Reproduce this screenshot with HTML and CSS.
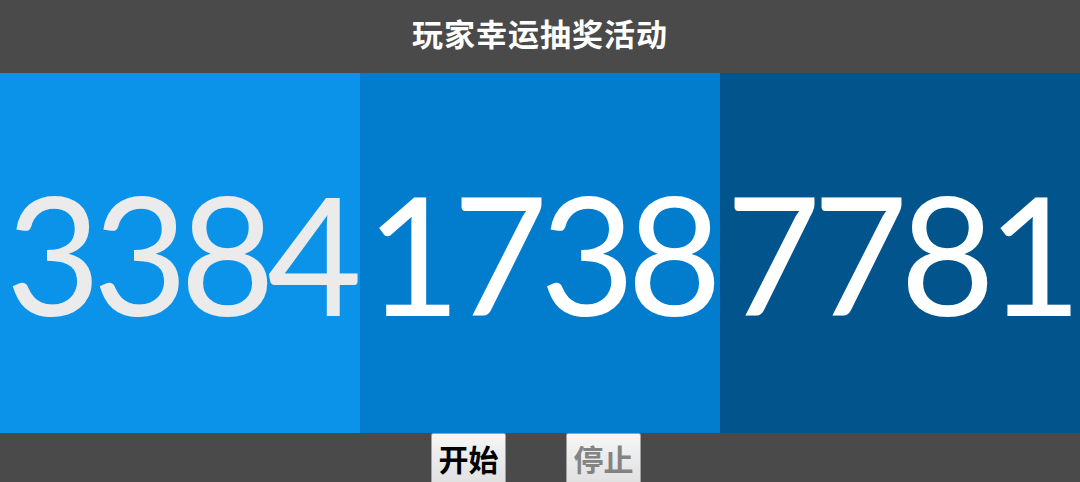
FILE: index.html
```html
<!DOCTYPE html>
<html lang="zh-CN">
<head>
<meta charset="utf-8">
<title>玩家幸运抽奖活动</title>
<link rel="stylesheet" href="styles.css">
</head>
<body>
<header class="top">
  <h1 class="title">玩家幸运抽奖活动</h1>
</header>
<main class="panels">
  <div class="panel p1">3384</div>
  <div class="panel p2">1738</div>
  <div class="panel p3">7781</div>
</main>
<footer class="bar">
  <button class="btn" type="button">开始</button>
  <button class="btn off" type="button" disabled>停止</button>
</footer>
</body>
</html>
```
FILE: styles.css
```css
html, body {
  margin: 0;
  padding: 0;
  background: #4a4a4a;
  overflow: hidden;
}
body {
  width: 1080px;
  height: 482px;
  font-family: "Noto Sans CJK SC", "Noto Sans", sans-serif;
}
.top {
  height: 73px;
  background: #4a4a4a;
  display: flex;
  align-items: center;
  justify-content: center;
}
.title {
  margin: 0;
  color: #ffffff;
  font-size: 31px;
  font-weight: 700;
  letter-spacing: 1px;
  line-height: 1;
  padding-bottom: 8px;
}
.panels {
  display: flex;
  height: 360px;
}
.panel {
  width: 360px;
  height: 360px;
  font-family: "Lato", "Open Sans", sans-serif;
  font-size: 164px;
  letter-spacing: -8px;
  line-height: 360px;
  text-align: center;
  color: #ffffff;
  overflow: hidden;
  white-space: nowrap;
}
.p1 { background: #0b93e9; color: #ebebeb; }
.p2 { background: #027dcd; }
.p3 { background: #01548c; }
.bar {
  height: 49px;
  background: #4a4a4a;
  display: flex;
  justify-content: center;
  align-items: flex-start;
  gap: 60px;
  padding-right: 8px;
}
.btn {
  margin: 0;
  width: 75px;
  height: 56px;
  padding: 0 0 6px;
  font-family: "Noto Sans CJK SC", sans-serif;
  font-size: 30px;
  font-weight: 700;
  line-height: 1;
  color: #000000;
  background: linear-gradient(#f6f6f6, #dedede);
  border: 1px solid #a0a0a0;
  border-radius: 2px;
}
.btn.off {
  color: #838383;
}
```
